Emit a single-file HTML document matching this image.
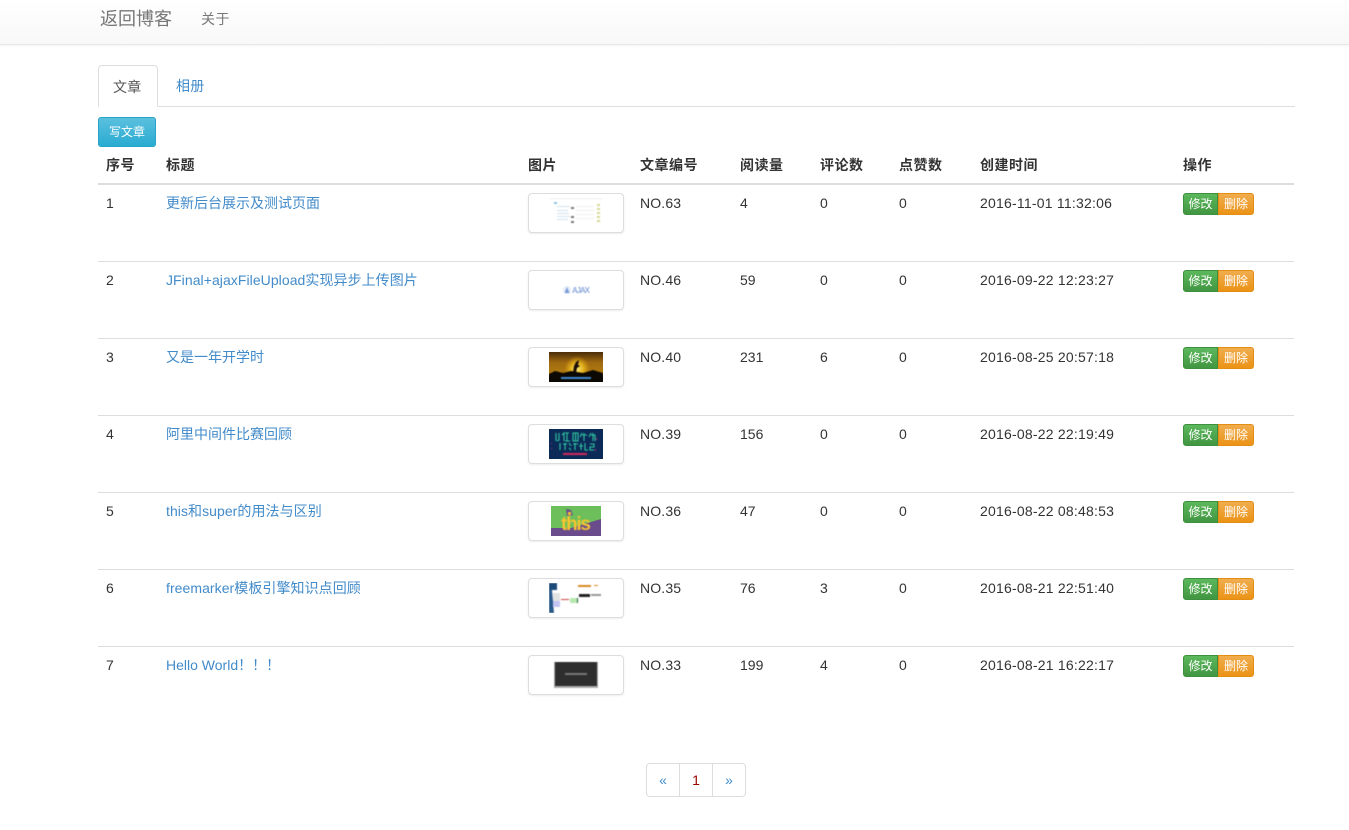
<!DOCTYPE html>
<html lang="zh"><head><meta charset="utf-8"><title>后台</title>
<style>
*{box-sizing:border-box}
html,body{margin:0;padding:0;background:#fff}
body{width:1349px;height:830px;overflow:hidden;position:relative;font:14px/20px "Liberation Sans","WenQuanYi Zen Hei","Noto Sans CJK SC",sans-serif;color:#333}
a{color:#428bca;text-decoration:none}
.nav{position:absolute;left:0;top:0;width:1349px;height:45px;background:linear-gradient(#fff,#f8f8f8);border-bottom:1px solid #e7e7e7;box-shadow:0 1px 2px rgba(0,0,0,.05)}
.nav a{position:absolute;color:#777}
.brand{left:100px;top:9px;font-size:18px}
.about{left:201px;top:9px;letter-spacing:.5px}
.tabs{position:absolute;left:98px;top:65px;width:1197px;height:42px;border-bottom:1px solid #ddd}
.tabs a{position:absolute;top:0;height:42px;padding:11px 14px;letter-spacing:.3px}
.tabs .on{left:0;width:60px;background:#fff;border:1px solid #ddd;border-bottom-color:#fff;border-radius:4px 4px 0 0;color:#555}
.tabs .off{left:64px;padding-left:14px}
.write{position:absolute;left:98px;top:117px;width:58px;height:30px;text-align:center;font-size:12px;line-height:28px;color:#fff;background:linear-gradient(#5bc0de,#2aabd2);border:1px solid #28a4c9;border-radius:3px}
table{position:absolute;left:98px;top:147px;width:1196px;border-collapse:separate;border-spacing:0;table-layout:fixed}
th,td{padding:8px;text-align:left;vertical-align:top;line-height:20px}
th{border-bottom:2px solid #ddd;font-weight:bold;letter-spacing:.5px}
tr+tr td{border-top:1px solid #ddd}
.th{display:block;width:96px;height:40px;padding:4px;margin-bottom:20px;background:#fff;border:1px solid #ddd;border-radius:4px;box-shadow:0 1px 2px rgba(0,0,0,.075)}
.th svg{display:block;margin:0 auto}
.b{filter:blur(.4px)}
.d{letter-spacing:.22px}
.n{letter-spacing:.15px}
.l{letter-spacing:.06px}
.g{float:left;height:22px;font-size:12px;line-height:20px;color:#fff;text-align:center;border:1px solid}
.x{width:35px;background:linear-gradient(#5cb85c,#419641);border-color:#3e8f3e;border-radius:3px 0 0 3px}
.y{width:36px;background:linear-gradient(#f0ad4e,#eb9316);border-color:#e38d13;border-radius:0 3px 3px 0}
.pg{position:absolute;left:646px;top:763px;width:100px;height:34px;border:1px solid #ddd;border-radius:4px;display:flex}
.pg a{flex:1;text-align:center;line-height:32px;border-left:1px solid #ddd}
.pg a:first-child{border-left:0}
.pg .c{color:#900}
</style></head><body>
<div class="nav"><a class="brand" href="#">返回博客</a><a class="about" href="#">关于</a></div>
<div class="tabs"><a class="on" href="#">文章</a><a class="off" href="#">相册</a></div>
<a class="write" href="#">写文章</a>
<table>
<colgroup><col style="width:60px"><col style="width:362px"><col style="width:112px"><col style="width:100px"><col style="width:80px"><col style="width:79px"><col style="width:81px"><col style="width:203px"><col style="width:119px"></colgroup>
<thead><tr><th>序号</th><th>标题</th><th>图片</th><th>文章编号</th><th>阅读量</th><th>评论数</th><th>点赞数</th><th>创建时间</th><th>操作</th></tr></thead>
<tbody>
<tr><td>1</td><td><a href="#">更新后台展示及测试页面</a></td><td><div class="th"><svg width="54" height="30"><rect width="54" height="30" fill="#fff"/><g class="b"><rect x="0" y="0" width="54" height="1" fill="#eee"/><rect x="5" y="4" width="3" height="2" fill="#8cc8e0"/><g fill="#d3e0ee"><rect x="8" y="8" width="13" height="1"/><rect x="8" y="12" width="11" height="1"/><rect x="8" y="15" width="12" height="1"/><rect x="8" y="18" width="13" height="1"/><rect x="8" y="21" width="11" height="1"/></g><g fill="#777"><rect x="22" y="9" width="3" height="2"/><rect x="22" y="18" width="3" height="2"/><rect x="22" y="23" width="3" height="2"/></g><g fill="#eee"><rect x="27" y="8" width="18" height="1"/><rect x="27" y="12" width="18" height="1"/><rect x="27" y="16" width="18" height="1"/><rect x="27" y="20" width="18" height="1"/></g><g fill="#d5d890"><rect x="48" y="6" width="3" height="2"/><rect x="48" y="10" width="3" height="2"/><rect x="48" y="14" width="3" height="2"/><rect x="48" y="18" width="3" height="2"/><rect x="48" y="22" width="3" height="2"/></g></g></svg></div></td><td class="n">NO.63</td><td>4</td><td>0</td><td>0</td><td class="d">2016-11-01 11:32:06</td><td><a class="g x" href="#">修改</a><a class="g y" href="#">删除</a></td></tr>
<tr><td>2</td><td><a class="l" href="#">JFinal+ajaxFileUpload实现异步上传图片</a></td><td><div class="th"><svg width="54" height="30"><rect width="54" height="30" fill="#fff"/><g class="b"><circle cx="18" cy="15" r="4" fill="#e6edf8"/><path d="M15.5 18l2.500-6 2.500 6z" fill="#7c9bd8"/><text x="23" y="18" font-family="Liberation Sans" font-size="8" font-weight="bold" fill="#8fa9dc" textLength="18">AJAX</text></g></svg></div></td><td class="n">NO.46</td><td>59</td><td>0</td><td>0</td><td class="d">2016-09-22 12:23:27</td><td><a class="g x" href="#">修改</a><a class="g y" href="#">删除</a></td></tr>
<tr><td>3</td><td><a href="#">又是一年开学时</a></td><td><div class="th"><svg width="54" height="30"><defs><linearGradient id="a" x1="0" y1="0" x2="0" y2="1"><stop offset="0" stop-color="#4a2c08"/><stop offset=".35" stop-color="#a06a10"/><stop offset=".7" stop-color="#b07a10"/><stop offset=".85" stop-color="#1a1005"/></linearGradient><radialGradient id="c"><stop offset="0" stop-color="#fff080"/><stop offset=".5" stop-color="#f0c020" stop-opacity=".8"/><stop offset="1" stop-color="#e0a010" stop-opacity="0"/></radialGradient></defs><rect width="54" height="30" fill="url(#a)"/><g class="b"><circle cx="28" cy="17" r="13" fill="url(#c)"/><path d="M24 21l1-7 2-4 3-2-1 5 2 1-3 2-1 5z" fill="#1a0e05"/><path d="M0 22l6-3 8 2 8-2 12 2 10-3 10 3v9H0z" fill="#0c0803"/><rect x="12" y="25" width="30" height="2" fill="#3b8ad0"/></g></svg></div></td><td class="n">NO.40</td><td>231</td><td>6</td><td>0</td><td class="d">2016-08-25 20:57:18</td><td><a class="g x" href="#">修改</a><a class="g y" href="#">删除</a></td></tr>
<tr><td>4</td><td><a href="#">阿里中间件比赛回顾</a></td><td><div class="th"><svg width="54" height="30"><rect width="54" height="30" fill="#0c2a58"/><g class="b"><g fill="none" stroke="#2fc6a0" stroke-width="1.100"><path d="M7 4v8M10 4v7l-2 1M13 6l2-2v8M16 4h4M18 4v8M16 12h5M24 4h5v8h-5zM26.500 4v8M33 4l-2 4M33 6h5M35 4v8M42 4l-2 4M42 6h4v6M44 4v8"/><path d="M11 14v7M14 15h4M16 14v7M20 14l2 3M22 21l-2-2M24 15h5M26 14v7M30 17h4M32 14v7M36 14v7h3M41 15h4v3h-4v3h4"/></g><rect x="14" y="24" width="24" height="2" fill="#d0285c"/><g fill="#a0306a"><rect x="2" y="14" width="1" height="1"/><rect x="2" y="19" width="1" height="1"/><rect x="47" y="9" width="1" height="2"/><rect x="46" y="20" width="1" height="2"/></g></g></svg></div></td><td class="n">NO.39</td><td>156</td><td>0</td><td>0</td><td class="d">2016-08-22 22:19:49</td><td><a class="g x" href="#">修改</a><a class="g y" href="#">删除</a></td></tr>
<tr><td>5</td><td><a class="l" href="#">this和super的用法与区别</a></td><td><div class="th"><svg width="50" height="30"><rect width="50" height="30" fill="#6cbf5a"/><path d="M0 22h20L50 13v17H0z" fill="#6a4c8c"/><g class="b"><path d="M15 3l5 1 2 5-6 1z" fill="#6a4c8c"/><rect x="17" y="6" width="3" height="3" fill="#f5c431"/><text x="10" y="24" font-family="Liberation Sans" font-size="19" font-weight="bold" fill="#f5c431" textLength="30">this</text></g></svg></div></td><td class="n">NO.36</td><td>47</td><td>0</td><td>0</td><td class="d">2016-08-22 08:48:53</td><td><a class="g x" href="#">修改</a><a class="g y" href="#">删除</a></td></tr>
<tr><td>6</td><td><a class="l" href="#">freemarker模板引擎知识点回顾</a></td><td><div class="th"><svg width="54" height="30"><rect width="54" height="30" fill="#fff"/><g class="b"><rect x="0" y="0" width="8" height="7" fill="#1c4a78"/><path d="M0 7h3l2 23H0z" fill="#2a5a8c"/><rect x="4" y="10" width="7" height="8" fill="#e2e2e2"/><rect x="4" y="18" width="7" height="6" fill="#c4c4f4"/><rect x="12" y="16" width="8" height="1" fill="#c44"/><rect x="21" y="15" width="7" height="5" fill="#b8e8b0"/><rect x="28" y="15" width="1" height="5" fill="#264"/><rect x="29" y="2" width="13" height="2" fill="#d88a20"/><rect x="45" y="2" width="4" height="1" fill="#d88a20"/><rect x="30" y="11" width="11" height="3" fill="#222"/><rect x="42" y="11" width="10" height="2" fill="#999"/></g></svg></div></td><td class="n">NO.35</td><td>76</td><td>3</td><td>0</td><td class="d">2016-08-21 22:51:40</td><td><a class="g x" href="#">修改</a><a class="g y" href="#">删除</a></td></tr>
<tr><td>7</td><td><a href="#">Hello World！！！</a></td><td><div class="th"><svg width="54" height="30"><rect width="54" height="30" fill="#fff"/><g class="b"><rect x="5" y="2" width="44" height="26" fill="#aaa"/><rect x="6" y="2" width="42" height="24" fill="#2e2e2e"/><rect x="16" y="13" width="22" height="2" fill="#777"/></g></svg></div></td><td class="n">NO.33</td><td>199</td><td>4</td><td>0</td><td class="d">2016-08-21 16:22:17</td><td><a class="g x" href="#">修改</a><a class="g y" href="#">删除</a></td></tr>
</tbody></table>
<div class="pg"><a href="#">«</a><a class="c" href="#">1</a><a href="#">»</a></div>
</body></html>
